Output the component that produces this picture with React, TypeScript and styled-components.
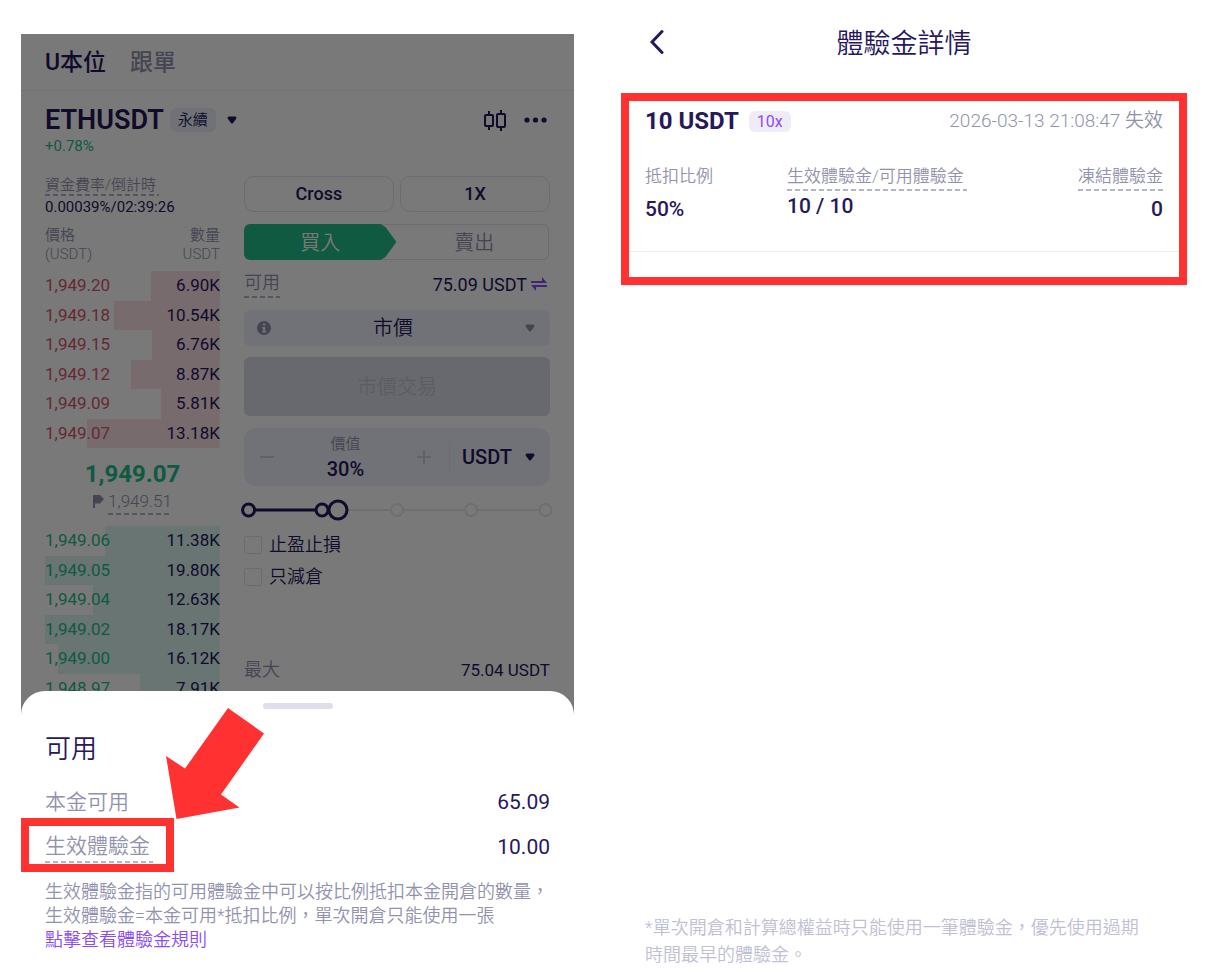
import React from "react";
import styled, { createGlobalStyle } from "styled-components";

const color = {
  navy: "#27175b",
  muted: "#9292ae",
  dash: "#b4b4ca",
  faint: "#c0c0d4",
  line: "#e1e1ee",
  field: "#eef0fa",
  green: "#22bd8a",
  red: "#d9566f",
  purple: "#8a4cf7",
  mark: "#ff3131",
};

const GlobalStyle = createGlobalStyle`
  *, *::before, *::after { box-sizing: border-box; }
  body { margin: 0; background: #fff; }
  body, button, input, select {
    font-family: Roboto, "Noto Sans CJK TC", sans-serif;
    color: ${color.navy};
  }
  button, input, select { border: 0; padding: 0; margin: 0; background: none; outline: none; }
  h1, h2, p, dl, dd { margin: 0; font-weight: 400; }
`;

const Page = styled.div`
  display: grid;
  grid-template-columns: minmax(0, 553fr) minmax(0, 566fr);
  column-gap: 47px;
  padding: 0 19px 0 21px;
  min-height: 100vh;
`;

/* ---------- trading screen ---------- */

const Phone = styled.section`
  display: grid;
  grid-template-columns: minmax(0, 1fr);
  margin-top: 34px;
  > * { grid-area: 1 / 1; }
`;

const Shade = styled.div`
  background: rgba(0, 0, 0, 0.525);
  z-index: 1;
`;

const Tabs = styled.nav`
  display: flex;
  align-items: center;
  gap: 24px;
  height: 57px;
  padding: 0 24px 4px;
  border-bottom: 1px solid #f0f0f4;
`;

const Tab = styled.button<{ $active?: boolean }>`
  font-size: 23px;
  font-weight: 500;
  color: ${(p) => (p.$active ? color.navy : color.muted)};
`;

const SymbolBar = styled.div`
  display: flex;
  align-items: center;
  height: 32px;
  margin: 13px 24px 0;
`;

const SymbolName = styled.h1`
  font-size: 27px;
  font-weight: 600;
  line-height: 32px;
`;

const Perpetual = styled.span`
  margin: 0 11px 0 6px;
  padding: 0 8px;
  border-radius: 6px;
  background: ${color.field};
  font-size: 15px;
  font-weight: 350;
  line-height: 24px;
`;

const Tools = styled.div`
  display: flex;
  align-items: center;
  gap: 18px;
  margin-left: auto;
  margin-right: 3px;
`;

const IconButton = styled.button`
  display: flex;
`;

const Change = styled.p`
  margin: 0 24px 20px;
  font-size: 15px;
  line-height: 20px;
  color: ${color.green};
`;

const Columns = styled.div`
  display: grid;
  grid-template-columns: minmax(0, 4fr) minmax(0, 7fr);
  column-gap: 24px;
  padding: 0 24px;
`;

const Dashed = styled.span<{ $size: number; $line: number; $wide?: boolean }>`
  display: inline-block;
  font-size: ${(p) => p.$size}px;
  font-weight: 350;
  line-height: ${(p) => p.$line}px;
  color: ${color.muted};
  padding-right: ${(p) => (p.$wide ? 3 : 0)}px;
  padding-bottom: 2px;
  background: repeating-linear-gradient(90deg, ${color.dash} 0 5px, transparent 5px 8px)
    left bottom / 100% 2px no-repeat;
`;

const Funding = styled.div`
  display: flex;
  flex-direction: column;
  align-items: flex-start;
  font-size: 15px;
  line-height: 22px;
  margin-bottom: 8px;
`;

const Book = styled.table`
  width: 100%;
  border-collapse: collapse;
  font-size: 17px;
  th {
    padding: 0 0 7px;
    font-size: 15px;
    line-height: 19px;
    font-weight: 350;
    text-align: left;
    color: ${color.muted};
  }
  td { padding: 0 0 2px; line-height: 20px; }
  th:last-child, td:last-child { text-align: right; }
`;

const BookRow = styled.tr<{ $side: "ask" | "bid" }>`
  height: 30px;
  &:nth-child(even) { height: 29px; }
  background-image: linear-gradient(
    ${(p) => (p.$side === "ask" ? "#fae2e6, #fae2e6" : "#dcf6f2, #dcf6f2")}
  );
  background-repeat: no-repeat;
  background-position: right top;
  td:first-child { color: ${(p) => (p.$side === "ask" ? color.red : color.green)}; }
`;

const LastPrice = styled.p`
  margin-top: 10px;
  font-size: 24px;
  font-weight: 700;
  line-height: 32px;
  text-align: center;
  color: ${color.green};
`;

const MarkPrice = styled.div`
  display: flex;
  justify-content: center;
  gap: 4px;
  margin-bottom: 11px;
  svg { margin-top: 5px; }
`;

const Order = styled.form`
  display: flex;
  flex-direction: column;
`;

const Pair = styled.div`
  display: grid;
  grid-template-columns: 1fr 1fr;
  gap: 6px;
`;

const Outlined = styled.button`
  height: 36px;
  padding-bottom: 2px;
  border: 1px solid ${color.line};
  border-radius: 10px;
  font-size: 18px;
  font-weight: 500;
`;

const Sides = styled.div`
  display: grid;
  grid-template-columns: 1fr 1fr;
  height: 36px;
  margin: 12px 1px 0 0;
`;

const Buy = styled.button`
  z-index: 0;
  padding-bottom: 2px;
  border-radius: 6px 0 0 6px;
  background: ${color.green};
  color: #fff;
  font-size: 20px;
  font-weight: 350;
  clip-path: polygon(0 0, calc(100% - 16px) 0, calc(100% - 11px) 3px, 100% 50%, calc(100% - 11px) 33px, calc(100% - 16px) 100%, 0 100%);
`;

const Sell = styled.button`
  margin-left: -16px;
  padding: 0 0 2px 20px;
  border: 1px solid ${color.line};
  border-left: 0;
  border-radius: 0 6px 6px 0;
  color: ${color.muted};
  font-size: 20px;
  font-weight: 350;
`;

const Available = styled.div`
  display: flex;
  align-items: center;
  justify-content: space-between;
  height: 28px;
  margin: 10px 0 12px;
`;

const Maximum = styled.div`
  display: flex;
  align-items: center;
  justify-content: space-between;
  height: 24px;
  margin-top: 65px;
`;

const Amount = styled.span<{ $size: number }>`
  display: flex;
  align-items: center;
  gap: 4px;
  font-size: ${(p) => p.$size}px;
  svg { margin-right: 3px; }
`;

const Muted = styled.span`
  color: ${color.muted};
  font-size: 18px;
  font-weight: 350;
  line-height: 24px;
`;

const TypeField = styled.div`
  display: flex;
  align-items: center;
  height: 36px;
  padding: 0 15px 0 13px;
  border-radius: 6px;
  background: ${color.field};
  select { padding-right: 10px; text-align-last: center; }
`;

const Select = styled.select<{ $weight: number }>`
  flex: 1;
  min-width: 0;
  appearance: none;
  font-size: 20px;
  font-weight: ${(p) => p.$weight};
`;

const Submit = styled.button`
  height: 59px;
  margin: 11px 0 12px;
  padding-bottom: 2px;
  border-radius: 6px;
  background: #dbdde8;
  color: #c3c5d0;
  font-size: 20px;
  font-weight: 350;
`;

const ValueField = styled.div`
  display: flex;
  align-items: center;
  height: 58px;
  padding: 0 15px;
  border-radius: 12px;
  background: ${color.field};
`;

const ValueBox = styled.label`
  flex: 1;
  min-width: 0;
  display: flex;
  flex-direction: column;
  align-items: center;
  font-size: 15px;
  font-weight: 350;
  line-height: 22px;
  color: ${color.muted};
  padding-top: 2px;
  input {
    width: 100%;
    height: 28px;
    text-align: center;
    font-size: 20px;
    font-weight: 500;
  }
`;

const Unit = styled.div`
  display: flex;
  align-items: center;
  width: 86px;
  height: 30px;
  margin-left: 17px;
  padding-left: 12px;
  border-left: 1px solid ${color.line};
`;

const SliderBox = styled.div`
  display: grid;
  height: 22px;
  margin: 13px 0 8px;
  > * { grid-area: 1 / 1; width: 100%; height: 22px; overflow: visible; }
  input { opacity: 0; }
`;

const Check = styled.label`
  display: flex;
  align-items: center;
  gap: 7px;
  height: 32px;
  font-size: 18px;
  font-weight: 350;
  line-height: 24px;
  input {
    appearance: none;
    width: 18px;
    height: 18px;
    border: 1px solid ${color.line};
    border-radius: 2px;
  }
`;

/* ---------- bottom sheet ---------- */

const Sheet = styled.section`
  z-index: 2;
  align-self: end;
  display: flex;
  flex-direction: column;
  padding: 12px 24px 28px;
  border-radius: 24px 24px 0 0;
  background: #fff;
`;

const Handle = styled.span`
  align-self: center;
  width: 70px;
  height: 6px;
  border-radius: 3px;
  background: #dfdfe9;
`;

const SheetTitle = styled.h2`
  margin: 22px 0 17px;
  font-size: 26px;
  font-weight: 350;
  line-height: 36px;
`;

const SheetRow = styled.div`
  position: relative;
  display: flex;
  align-items: center;
  justify-content: space-between;
  height: 45px;
  padding-bottom: 10px;
  font-size: 21px;
`;

const SheetLabel = styled.span`
  color: ${color.muted};
  font-weight: 350;
  line-height: 30px;
`;

const Frame = styled.span`
  position: absolute;
  left: -24px;
  top: -11px;
  width: 153px;
  height: 54px;
  border: 8px solid ${color.mark};
`;

const Arrow = styled.svg`
  position: absolute;
  left: 121px;
  top: -121px;
`;

const Note = styled.p`
  margin-top: 6px;
  font-size: 18px;
  font-weight: 350;
  line-height: 24px;
  color: ${color.muted};
  white-space: nowrap;
  a { display: block; color: ${color.purple}; text-decoration: none; }
`;

/* ---------- voucher details ---------- */

const Details = styled.section`
  display: flex;
  flex-direction: column;
`;

const TopBar = styled.header`
  display: grid;
  grid-template-columns: 40px 1fr 40px;
  align-items: center;
  height: 82px;
  margin-bottom: 11px;
  padding: 0 24px;
  h1 { font-size: 27px; font-weight: 350; text-align: center; }
`;

const Voucher = styled.article`
  border: 8px solid ${color.mark};
  padding-bottom: 25px;
`;

const VoucherHead = styled.div`
  display: flex;
  align-items: center;
  height: 40px;
  padding: 0 16px;
  h2 { font-size: 24px; font-weight: 700; }
  time { margin-left: auto; font-size: 19px; font-weight: 350; line-height: 24px; color: ${color.muted}; }
`;

const Leverage = styled.span`
  margin-left: 10px;
  padding: 0 8px;
  border-radius: 6px;
  background: #efecf8;
  color: ${color.purple};
  font-size: 16px;
  line-height: 21px;
`;

const Stats = styled.dl`
  display: grid;
  grid-template-columns: 142px 1fr auto;
  padding: 23px 13px 27px 16px;
  border-bottom: 1px solid #ececf2;
`;

const Stat = styled.div<{ $end?: boolean; $gap?: number }>`
  text-align: ${(p) => (p.$end ? "right" : "left")};
  dt { display: flex; font-size: 17px; font-weight: 350; line-height: 25px; color: ${color.muted}; }
  dd {
    margin-top: ${(p) => p.$gap ?? 0}px;
    padding-right: ${(p) => (p.$end ? 3 : 0)}px;
    font-size: 21px;
    font-weight: 500;
    line-height: 30px;
  }
`;

const Footnote = styled.p`
  margin: auto 0 0;
  padding: 0 24px 12px;
  font-size: 18px;
  font-weight: 350;
  line-height: 27px;
  color: ${color.faint};
`;

const Caret = ({ fill = color.navy }: { fill?: string }) => (
  <svg width="10" height="8" viewBox="0 0 10 8" aria-hidden="true">
    <path d="M2 .5h6c1.400 0 2 1.500 1 2.500L6 7c-.6.700-1.400.700-2 0L1 3C0 2 .6.500 2 .5Z" fill={fill} />
  </svg>
);

const asks: [string, string, number][] = [
  ["1,949.20", "6.90K", 39.5],
  ["1,949.18", "10.54K", 60.5],
  ["1,949.15", "6.76K", 39],
  ["1,949.12", "8.87K", 51],
  ["1,949.09", "5.81K", 33.5],
  ["1,949.07", "13.18K", 76],
];

const bids: [string, string, number][] = [
  ["1,949.06", "11.38K", 65.5],
  ["1,949.05", "19.80K", 100],
  ["1,949.04", "12.63K", 72.5],
  ["1,949.02", "18.17K", 100],
  ["1,949.00", "16.12K", 92.5],
  ["1,948.97", "7.91K", 45.5],
];

const BookRows = ({ side, rows }: { side: "ask" | "bid"; rows: [string, string, number][] }) => (
  <tbody>
    {rows.map(([price, size, depth]) => (
      <BookRow key={price} $side={side} style={{ backgroundSize: `${depth}% 100%` }}>
        <td>{price}</td>
        <td>{size}</td>
      </BookRow>
    ))}
  </tbody>
);

const OrderBook = () => (
  <div>
    <Funding>
      <Dashed $size={15} $line={18} $wide>資金費率/倒計時</Dashed>
      <span>0.00039%/02:39:26</span>
    </Funding>
    <Book>
      <thead>
        <tr>
          <th>價格<br />(USDT)</th>
          <th>數量<br />USDT</th>
        </tr>
      </thead>
      <BookRows side="ask" rows={asks} />
    </Book>
    <LastPrice>1,949.07</LastPrice>
    <MarkPrice>
      <svg width="11" height="13" viewBox="0 0 11 13" aria-hidden="true">
        <path d="M0 0h7l4 4-4 4.500H2V13H0Z" fill={color.muted} />
      </svg>
      <Dashed $size={17} $line={23}>1,949.51</Dashed>
    </MarkPrice>
    <Book>
      <BookRows side="bid" rows={bids} />
    </Book>
  </div>
);

const OrderForm = () => (
  <Order>
    <Pair>
      <Outlined type="button">Cross</Outlined>
      <Outlined type="button">1X</Outlined>
    </Pair>
    <Sides>
      <Buy type="button">買入</Buy>
      <Sell type="button">賣出</Sell>
    </Sides>
    <Available>
      <Dashed $size={18} $line={26}>可用</Dashed>
      <Amount $size={18}>
        75.09 USDT
        <svg width="16" height="14" viewBox="0 0 16 14" aria-hidden="true">
          <path d="M0 4h11V0l5 6H0ZM16 8H0l5 6v-4h11Z" fill={color.purple} />
        </svg>
      </Amount>
    </Available>
    <TypeField>
      <svg width="14" height="14" viewBox="0 0 14 14" aria-hidden="true">
        <circle cx="7" cy="7" r="7" fill={color.muted} />
        <path d="M6 2.500h2.200v2H6ZM5.200 6h3v4h1v1.400H5V10h1V7.400h-.8Z" fill={color.field} />
      </svg>
      <Select $weight={350} aria-label="訂單類型" defaultValue="market">
        <option value="market">市價</option>
      </Select>
      <Caret fill={color.muted} />
    </TypeField>
    <Submit type="button" disabled>市價交易</Submit>
    <ValueField>
      <IconButton type="button" aria-label="減少">
        <svg width="16" height="16" viewBox="0 0 16 16">
          <path d="M1 8h14" stroke={color.faint} strokeWidth="1.500" />
        </svg>
      </IconButton>
      <ValueBox>
        價值
        <input defaultValue="30%" />
      </ValueBox>
      <IconButton type="button" aria-label="增加">
        <svg width="16" height="16" viewBox="0 0 16 16">
          <path d="M1 8h14M8 1v14" stroke={color.faint} strokeWidth="1.500" />
        </svg>
      </IconButton>
      <Unit>
        <Select $weight={500} aria-label="單位" defaultValue="USDT">
          <option>USDT</option>
        </Select>
        <Caret />
      </Unit>
    </ValueField>
    <SliderBox>
      <svg aria-hidden="true" fill="none">
        <line x1="33%" x2="98%" y1="11" y2="11" stroke="#e9e9f3" strokeWidth="2" />
        <line x1="2%" x2="30%" y1="11" y2="11" stroke={color.navy} strokeWidth="3" />
        {["50%", "74.2%", "98.5%"].map((x) => (
          <circle key={x} cx={x} cy="11" r="6" fill="#fff" stroke="#e9e9f3" strokeWidth="2" />
        ))}
        {["1.5%", "25.5%"].map((x) => (
          <circle key={x} cx={x} cy="11" r="6" fill="#fff" stroke={color.navy} strokeWidth="3" />
        ))}
        <circle cx="30.7%" cy="11" r="9" fill="#fff" stroke={color.navy} strokeWidth="3" />
      </svg>
      <input type="range" min="0" max="100" defaultValue="30" aria-label="倉位比例" />
    </SliderBox>
    <Check><input type="checkbox" />止盈止損</Check>
    <Check><input type="checkbox" />只減倉</Check>
    <Maximum>
      <Muted>最大</Muted>
      <Amount $size={17}>75.04 USDT</Amount>
    </Maximum>
  </Order>
);

export default function App() {
  return (
    <>
      <GlobalStyle />
      <Page>
        <Phone>
          <div>
            <Tabs>
              <Tab $active>U本位</Tab>
              <Tab>跟單</Tab>
            </Tabs>
            <SymbolBar>
              <SymbolName>ETHUSDT</SymbolName>
              <Perpetual>永續</Perpetual>
              <Caret />
              <Tools>
                <IconButton aria-label="K線圖">
                  <svg width="22" height="22" viewBox="0 0 22 22" fill="none" stroke={color.navy} strokeWidth="2">
                    <rect x="1" y="6" width="8" height="11" rx="1" />
                    <path d="M5 2v4M5 17v4M17 1v4M17 18v4" />
                    <rect x="13" y="5" width="8" height="13" rx="1" />
                  </svg>
                </IconButton>
                <IconButton aria-label="更多">
                  <svg width="23" height="6" viewBox="0 0 23 6" fill={color.navy}>
                    <circle cx="3" cy="3" r="2.600" />
                    <circle cx="11.500" cy="3" r="2.600" />
                    <circle cx="20" cy="3" r="2.600" />
                  </svg>
                </IconButton>
              </Tools>
            </SymbolBar>
            <Change>+0.78%</Change>
            <Columns>
              <OrderBook />
              <OrderForm />
            </Columns>
          </div>
          <Shade />
          <Sheet>
            <Handle />
            <SheetTitle>可用</SheetTitle>
            <SheetRow>
              <SheetLabel>本金可用</SheetLabel>
              <span>65.09</span>
            </SheetRow>
            <SheetRow>
              <Dashed $size={21} $line={30} $wide>生效體驗金</Dashed>
              <span>10.00</span>
              <Frame />
              <Arrow width="98" height="111" viewBox="0 0 98 111" aria-hidden="true">
                <path d="M62 0 98 25.500 55 86.500 73.500 99.500 10.500 111 0 48 19 60.500Z" fill={color.mark} />
              </Arrow>
            </SheetRow>
            <Note>
              生效體驗金指的可用體驗金中可以按比例抵扣本金開倉的數量，
              <br />
              生效體驗金=本金可用*抵扣比例，單次開倉只能使用一張
              <a href="#rules">點擊查看體驗金規則</a>
            </Note>
          </Sheet>
        </Phone>

        <Details>
          <TopBar>
            <IconButton aria-label="返回">
              <svg width="24" height="26" viewBox="0 0 24 26" fill="none" stroke={color.navy} strokeWidth="3">
                <path d="M17 3.500 7 14 17 24.500" strokeLinecap="round" />
              </svg>
            </IconButton>
            <h1>體驗金詳情</h1>
          </TopBar>
          <Voucher>
            <VoucherHead>
              <h2>10 USDT</h2>
              <Leverage>10x</Leverage>
              <time>2026-03-13 21:08:47 失效</time>
            </VoucherHead>
            <Stats>
              <Stat $gap={5}>
                <dt>抵扣比例</dt>
                <dd>50%</dd>
              </Stat>
              <Stat>
                <dt><Dashed $size={17} $line={25} $wide>生效體驗金/可用體驗金</Dashed></dt>
                <dd>10 / 10</dd>
              </Stat>
              <Stat $end $gap={3}>
                <dt><Dashed $size={17} $line={25} $wide>凍結體驗金</Dashed></dt>
                <dd>0</dd>
              </Stat>
            </Stats>
          </Voucher>
          <Footnote>
            *單次開倉和計算總權益時只能使用一筆體驗金，優先使用過期
            <br />
            時間最早的體驗金。
          </Footnote>
        </Details>
      </Page>
    </>
  );
}
